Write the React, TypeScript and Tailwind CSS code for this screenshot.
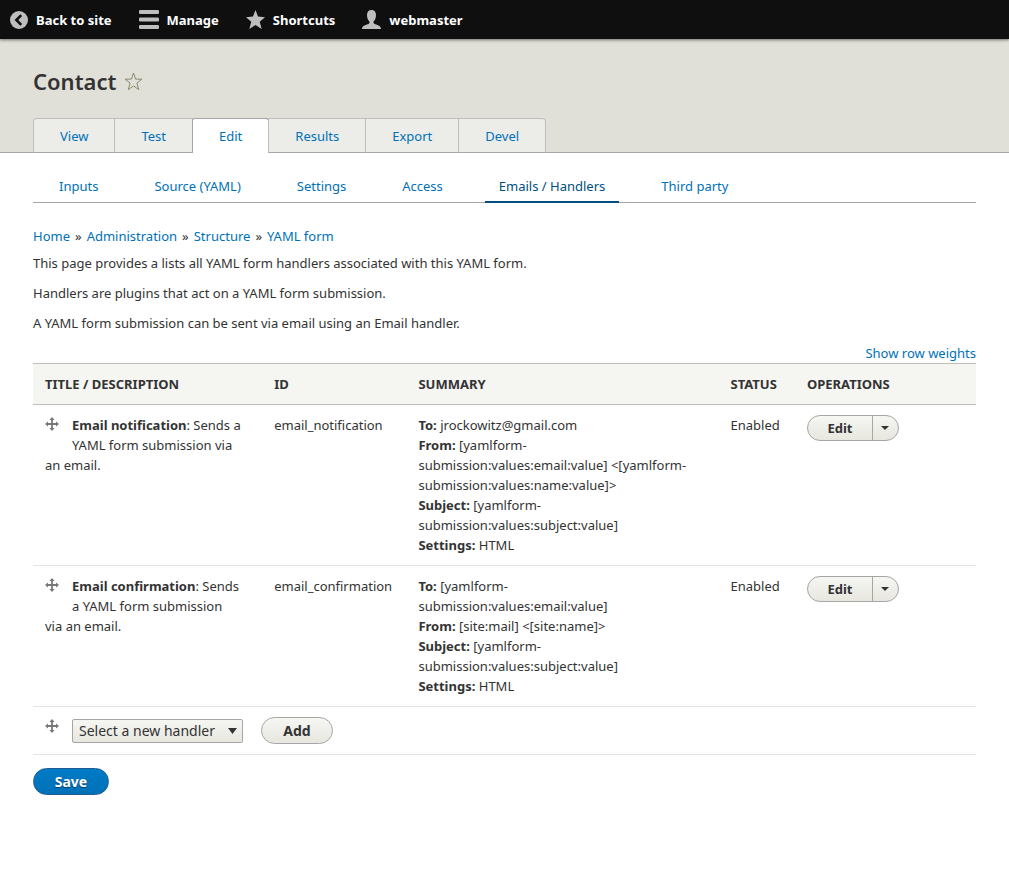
import React from "react";

type Tab = { label: string; active?: boolean };

type Handler = {
  title: string;
  id: string;
  summary: { label: string; value: string }[];
  status: string;
};

const primaryTabs: Tab[] = [
  { label: "View" },
  { label: "Test" },
  { label: "Edit", active: true },
  { label: "Results" },
  { label: "Export" },
  { label: "Devel" },
];

const secondaryTabs: Tab[] = [
  { label: "Inputs" },
  { label: "Source (YAML)" },
  { label: "Settings" },
  { label: "Access" },
  { label: "Emails / Handlers", active: true },
  { label: "Third party" },
];

const handlers: Handler[] = [
  {
    title: "Email notification",
    id: "email_notification",
    summary: [
      { label: "To:", value: "jrockowitz@gmail.com" },
      {
        label: "From:",
        value:
          "[yamlform-submission:values:email:value] <[yamlform-submission:values:name:value]>",
      },
      { label: "Subject:", value: "[yamlform-submission:values:subject:value]" },
      { label: "Settings:", value: "HTML" },
    ],
    status: "Enabled",
  },
  {
    title: "Email confirmation",
    id: "email_confirmation",
    summary: [
      { label: "To:", value: "[yamlform-submission:values:email:value]" },
      { label: "From:", value: "[site:mail] <[site:name]>" },
      { label: "Subject:", value: "[yamlform-submission:values:subject:value]" },
      { label: "Settings:", value: "HTML" },
    ],
    status: "Enabled",
  },
];

function BackIcon() {
  return (
    <svg width="18" height="18" viewBox="0 0 18 18" aria-hidden="true">
      <circle cx="9" cy="9" r="9" fill="#bebebe" />
      <path d="M11.2 4.2 6.4 9l4.8 4.8" fill="none" stroke="#0f0f0f" strokeWidth="2.6" />
    </svg>
  );
}

function MenuIcon() {
  return (
    <svg width="20" height="19" viewBox="0 0 20 19" fill="#bebebe" aria-hidden="true">
      <rect width="20" height="4" rx="1.2" />
      <rect y="7.5" width="20" height="4" rx="1.2" />
      <rect y="15" width="20" height="4" rx="1.2" />
    </svg>
  );
}

function StarIcon() {
  return (
    <svg width="19" height="19" viewBox="0 0 19 19" fill="#bebebe" aria-hidden="true">
      <path d="M9.5 0 12 6.6 19 7.2 13.7 11.7 15.7 19 9.5 15 3.3 19 5.3 11.7 0 7.2 7 6.6Z" />
    </svg>
  );
}

function PersonIcon() {
  return (
    <svg width="19" height="19" viewBox="0 0 19 19" fill="#bebebe" aria-hidden="true">
      <path d="M9.5 0C6.6 0 5 1.9 5 5c0 2.300.7 4.700 2.100 6.100.6.700.6 2.100-.3 2.600C4.500 14.800 0 15.300 0 19h19c0-3.700-4.500-4.200-6.800-5.300-.9-.5-.9-1.900-.3-2.600C13.300 9.700 14 7.300 14 5c0-3.100-1.600-5-4.500-5Z" />
    </svg>
  );
}

function FavoriteIcon() {
  return (
    <svg width="19" height="19" viewBox="0 0 19 19" aria-hidden="true">
      <path
        d="M9.500 1 11.600 7.100 18 7.200 12.900 11.100 14.700 17.600 9.500 13.900 4.300 17.600 6.100 11.100 1 7.200 7.400 7.100Z"
        fill="none"
        stroke="#8a8a70"
        strokeWidth="1"
        strokeLinejoin="round"
      />
    </svg>
  );
}

function MoveIcon() {
  return (
    <svg width="14" height="14" viewBox="0 0 14 14" aria-hidden="true">
      <path d="M7 2v10M2 7h10" stroke="#787878" strokeWidth="1.8" fill="none" />
      <path
        d="M7 0 9.600 3H4.400ZM7 14 4.400 11H9.600ZM0 7 3 4.400V9.600ZM14 7 11 9.600V4.400Z"
        fill="#787878"
      />
    </svg>
  );
}

function Caret({ wide }: { wide?: boolean }) {
  return wide ? (
    <svg width="9" height="6" viewBox="0 0 9 6" aria-hidden="true">
      <path d="M0 0h9L4.500 6Z" fill="#333" />
    </svg>
  ) : (
    <svg width="8" height="4" viewBox="0 0 8 4" aria-hidden="true">
      <path d="M0 0h8L4 4Z" fill="#333" />
    </svg>
  );
}

function ToolbarLink({ icon, label }: { icon: React.ReactNode; label: string }) {
  return (
    <a href="#" className="flex items-center gap-2 text-[13px] font-bold text-white">
      {icon}
      {label}
    </a>
  );
}

function DragHandle() {
  return (
    <a href="#" aria-label="Drag to re-order" className="float-left h-[22px] w-[27px] pt-[2px]">
      <MoveIcon />
    </a>
  );
}

function EditButton() {
  return (
    <div className="inline-flex h-[26px] overflow-hidden rounded-full border border-[#a6a6a6] bg-linear-to-b from-[#f6f6f3] to-[#e7e7df] align-top">
      <button type="button" className="w-[64px] text-[13px] font-bold text-[#333]">
        Edit
      </button>
      <button
        type="button"
        aria-label="List additional actions"
        className="flex w-[26px] items-center justify-center border-l border-[#a6a6a6]"
      >
        <Caret />
      </button>
    </div>
  );
}

export default function App() {
  return (
    <div className="min-h-screen bg-white font-['Noto_Sans',sans-serif] text-[13px] leading-5 text-[#333]">
      <nav
        aria-label="Toolbar"
        className="relative flex h-[39px] items-center gap-[27px] bg-[#0f0f0f] px-[10px] shadow-[0_1px_3px_rgba(0,0,0,0.5)]"
      >
        <ToolbarLink icon={<BackIcon />} label="Back to site" />
        <ToolbarLink icon={<MenuIcon />} label="Manage" />
        <ToolbarLink icon={<StarIcon />} label="Shortcuts" />
        <ToolbarLink icon={<PersonIcon />} label="webmaster" />
      </nav>

      <header className="border-b border-[#a6a6a6] bg-[#e0e0d8] px-[33px] pt-7">
        <div className="flex h-7 items-center gap-2">
          <h1 className="text-[22px] font-semibold">Contact</h1>
          <button type="button" aria-label="Add to shortcuts">
            <FavoriteIcon />
          </button>
        </div>
        <nav aria-label="Primary tabs" className="-mb-px mt-[23px] flex">
          {primaryTabs.map((tab) => (
            <a
              key={tab.label}
              href="#"
              className={
                tab.active
                  ? "-ml-px flex h-[35px] items-center rounded-t-[3px] border border-b-0 border-[#a6a6a6] bg-white px-[26px] text-[#0071b8]"
                  : "-ml-px flex h-[35px] items-center border border-b-[#a6a6a6] border-[#bfbfbf] bg-[#ecede8] px-[26px] text-[#0071b8] first:ml-0 first:rounded-tl-[4px] last:rounded-tr-[4px]"
              }
            >
              {tab.label}
            </a>
          ))}
        </nav>
      </header>

      <main className="px-[33px] pt-[17px]">
        <nav
          aria-label="Secondary tabs"
          className="flex h-[33px] gap-7 border-b border-[#a6a6a6] pl-3"
        >
          {secondaryTabs.map((tab) => (
            <a
              key={tab.label}
              href="#"
              className={
                tab.active
                  ? "-mb-px h-[33px] border-b-2 border-[#004f80] px-[14px] pt-[6px] text-[#004f80]"
                  : "px-[14px] pt-[6px] text-[#0071b8]"
              }
            >
              {tab.label}
            </a>
          ))}
        </nav>

        <nav aria-label="Breadcrumb" className="mt-[23px] flex gap-[5px]">
          <a href="#" className="text-[#0071b8]">Home</a>
          <span>»</span>
          <a href="#" className="text-[#0071b8]">Administration</a>
          <span>»</span>
          <a href="#" className="text-[#0071b8]">Structure</a>
          <span>»</span>
          <a href="#" className="text-[#0071b8]">YAML form</a>
        </nav>

        <div className="mt-[7px] flex flex-col gap-[10px]">
          <p>This page provides a lists all YAML form handlers associated with this YAML form.</p>
          <p>Handlers are plugins that act on a YAML form submission.</p>
          <p>A YAML form submission can be sent via email using an Email handler.</p>
        </div>

        <form onSubmit={(event) => event.preventDefault()}>
          <div className="mt-[10px] flex justify-end">
            <button type="button" className="text-[#0071b8]">
              Show row weights
            </button>
          </div>

          <table className="w-full table-fixed border-collapse text-left">
            <colgroup>
              <col className="w-[24.3%]" />
              <col className="w-[15.3%]" />
              <col className="w-[33.1%]" />
              <col className="w-[8.1%]" />
              <col className="w-[19.2%]" />
            </colgroup>
            <thead>
              <tr className="h-[41px] border-y border-[#bfbfba] bg-[#f5f5f2] uppercase">
                <th scope="col" className="px-3 font-bold">Title / Description</th>
                <th scope="col" className="px-3 font-bold">ID</th>
                <th scope="col" className="px-3 font-bold">Summary</th>
                <th scope="col" className="pl-3 font-bold">Status</th>
                <th scope="col" className="px-3 font-bold">Operations</th>
              </tr>
            </thead>
            <tbody>
              {handlers.map((handler) => (
                <tr key={handler.id} className="border-b border-[#e6e4df] align-top">
                  <td className="py-[10px] pl-3 pr-5">
                    <DragHandle />
                    <b>{handler.title}</b>: Sends a YAML form submission via an email.
                  </td>
                  <td className="px-3 py-[10px]">{handler.id}</td>
                  <td className="py-[10px] pl-3 pr-7">
                    {handler.summary.map((line) => (
                      <div key={line.label}>
                        <b>{line.label}</b> {line.value}
                      </div>
                    ))}
                  </td>
                  <td className="px-3 py-[10px]">{handler.status}</td>
                  <td className="px-3 py-[10px]">
                    <EditButton />
                  </td>
                </tr>
              ))}
              <tr className="border-b border-[#e6e4df] align-top">
                <td colSpan={5} className="h-12 px-3 py-[10px]">
                  <DragHandle />
                  <div className="flex items-center">
                    <div className="relative flex items-center">
                      <select
                        aria-label="Handler"
                        className="h-6 w-[171px] appearance-none rounded-[2px] border border-[#a6a6a6] bg-linear-to-b from-[#f6f6f3] to-[#e7e7df] pl-[6px] text-[14px] leading-5 text-[#333]"
                      >
                        <option>Select a new handler</option>
                      </select>
                      <span className="pointer-events-none absolute right-[6px]">
                        <Caret wide />
                      </span>
                    </div>
                    <button
                      type="button"
                      className="ml-[18px] h-[27px] w-[72px] rounded-full border border-[#a6a6a6] bg-linear-to-b from-[#f6f6f3] to-[#e7e7df] text-[14px] font-bold"
                    >
                      Add
                    </button>
                  </div>
                </td>
              </tr>
            </tbody>
          </table>

          <button
            type="submit"
            className="mt-[13px] h-[27px] w-[76px] rounded-full border border-[#1e5c90] bg-linear-to-b from-[#007bc6] to-[#0071b8] text-[14px] font-bold text-white [text-shadow:0_1px_1px_rgba(0,0,0,0.5)]"
          >
            Save
          </button>
        </form>
      </main>
    </div>
  );
}
